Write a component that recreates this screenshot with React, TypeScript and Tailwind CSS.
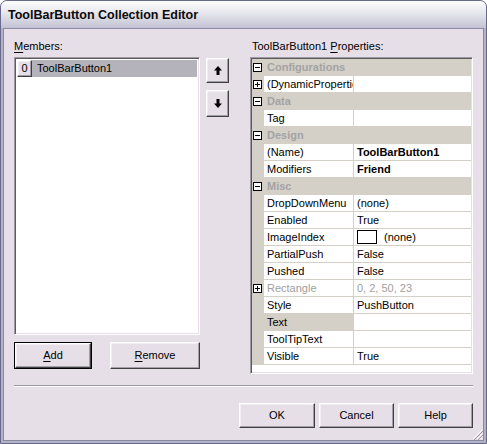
import React from 'react';

type Row =
  | { kind: 'cat'; label: string }
  | {
      kind: 'prop';
      name: string;
      value?: string;
      bold?: boolean;
      expand?: boolean;
      disabled?: boolean;
      selected?: boolean;
      image?: boolean;
    };

const rows: Row[] = [
  { kind: 'cat', label: 'Configurations' },
  { kind: 'prop', name: '(DynamicProperties)', expand: true },
  { kind: 'cat', label: 'Data' },
  { kind: 'prop', name: 'Tag' },
  { kind: 'cat', label: 'Design' },
  { kind: 'prop', name: '(Name)', value: 'ToolBarButton1', bold: true },
  { kind: 'prop', name: 'Modifiers', value: 'Friend', bold: true },
  { kind: 'cat', label: 'Misc' },
  { kind: 'prop', name: 'DropDownMenu', value: '(none)' },
  { kind: 'prop', name: 'Enabled', value: 'True' },
  { kind: 'prop', name: 'ImageIndex', value: '(none)', image: true },
  { kind: 'prop', name: 'PartialPush', value: 'False' },
  { kind: 'prop', name: 'Pushed', value: 'False' },
  { kind: 'prop', name: 'Rectangle', value: '0, 2, 50, 23', expand: true, disabled: true },
  { kind: 'prop', name: 'Style', value: 'PushButton' },
  { kind: 'prop', name: 'Text', selected: true },
  { kind: 'prop', name: 'ToolTipText' },
  { kind: 'prop', name: 'Visible', value: 'True' },
];

const raised =
  'border border-t-white border-l-white border-r-[#404040] border-b-[#404040] shadow-[inset_-1px_-1px_0_#a49ea8,inset_1px_1px_0_#f3eef3]';
const sunken =
  'border border-t-[#a09aa4] border-l-[#a09aa4] border-r-white border-b-white shadow-[inset_1px_1px_0_#5a5a5a,inset_-1px_-1px_0_#e7dfe7]';

function Toggle({ open }: { open: boolean }) {
  return (
    <div className="w-[9px] h-[9px] border border-black bg-white relative">
      <div className="absolute left-[1px] top-[3px] w-[5px] h-px bg-black" />
      {!open && <div className="absolute left-[3px] top-[1px] w-px h-[5px] bg-black" />}
    </div>
  );
}

function Arrow({ up }: { up: boolean }) {
  return (
    <svg width="8" height="9" viewBox="0 0 8 9" className={up ? '' : 'rotate-180'}>
      <polygon points="4,0 8,4.5 5.5,4.5 5.5,9 2.5,9 2.5,4.5 0,4.5" fill="#000" />
    </svg>
  );
}

function Button({ children, w, isDefault }: { children: React.ReactNode; w: string; isDefault?: boolean }) {
  if (isDefault) {
    return (
      <div className={`${w} h-[27px] border border-black`}>
        <div className={`${raised} w-full h-full flex items-center justify-center`}>{children}</div>
      </div>
    );
  }
  return <div className={`${raised} ${w} flex items-center justify-center`}>{children}</div>;
}

function PropertyGrid() {
  return (
    <div className={`${sunken} w-[223px] h-[317px] bg-white p-px`}>
      <div className="flex flex-col">
        {rows.map((r, i) =>
          r.kind === 'cat' ? (
            <div key={i} className="h-[17px] flex bg-[#d4d0c8]">
              <div className="w-[12px] flex items-center pl-[1px]">
                <Toggle open />
              </div>
              <div className="pl-[3px] leading-[16px] font-bold text-[#a3a3a3]">{r.label}</div>
            </div>
          ) : (
            <div key={i} className="h-[17px] flex">
              <div className="w-[12px] shrink-0 bg-[#d4d0c8] flex items-center pl-[1px]">
                {r.expand && <Toggle open={false} />}
              </div>
              <div
                className={`w-[89px] shrink-0 h-[17px] border-b border-[#d4d0c8] pl-[3px] leading-[16px] whitespace-nowrap overflow-hidden ${
                  r.selected ? 'bg-[#d4d0c8]' : ''
                } ${r.disabled ? 'text-[#a0a0a0]' : ''}`}
              >
                {r.name}
              </div>
              <div className="w-px bg-[#d4d0c8]" />
              <div
                className={`flex-1 h-[17px] border-b border-[#d4d0c8] pl-[3px] leading-[16px] flex items-start whitespace-nowrap ${
                  r.bold ? 'font-bold' : ''
                } ${r.disabled ? 'text-[#a0a0a0]' : ''}`}
              >
                {r.image && <div className="w-[20px] h-[14px] border border-black mt-[1px] mr-[7px]" />}
                {r.value}
              </div>
            </div>
          )
        )}
      </div>
    </div>
  );
}

export default function App() {
  return (
    <div className="w-[487px] h-[444px] bg-[#b3b3c8] border border-[#68688a] rounded-t-[7px] flex flex-col overflow-hidden font-['Liberation_Sans',Arial,sans-serif] text-[11px] text-black">
      <div className="h-[27px] shrink-0 bg-gradient-to-b from-[#fdfdfe] via-[#e3e3eb] to-[#c2c2d3] flex items-center pl-[7px] pt-[1px]">
        <span className="text-[12.5px] font-bold text-[#0a0a0a]">ToolBarButton Collection Editor</span>
      </div>
      <div className="flex-1 mx-[2px] mb-[2px] border border-[#8a8aa4] bg-[#e7dfe7] relative flex flex-col px-[10px] pt-[11px]">
        <div className="flex items-start">
          <div className="w-[186px] flex flex-col">
            <div className="h-[13px] leading-[13px]">
              <span className="underline underline-offset-2">M</span>embers:
            </div>
            <div className={`${sunken} mt-[4px] h-[278px] bg-white p-[2px]`}>
              <div className="h-[17px] flex bg-[#b4b3bb]">
                <div className={`${raised} w-[15px] h-[17px] bg-[#e7dfe7] flex items-center justify-center`}>0</div>
                <div className="pl-[5px] leading-[17px]">ToolBarButton1</div>
              </div>
            </div>
            <div className="flex justify-between mt-[7px]">
              <Button w="w-[78px]" isDefault>
                <span className="underline underline-offset-2">A</span>dd
              </Button>
              <Button w="w-[90px] h-[27px]">
                <span className="underline underline-offset-2">R</span>emove
              </Button>
            </div>
          </div>
          <div className="ml-[6px] mt-[18px] flex flex-col gap-[7px]">
            <div className={`${raised} w-[23px] h-[25px] flex items-center justify-center`}>
              <Arrow up />
            </div>
            <div className={`${raised} w-[23px] h-[27px] flex items-center justify-center`}>
              <Arrow up={false} />
            </div>
          </div>
          <div className="ml-[21px] flex flex-col">
            <div className="h-[13px] leading-[13px] pl-[2px]">
              ToolBarButton1 <span className="underline underline-offset-2">P</span>roperties:
            </div>
            <div className="mt-[4px]">
              <PropertyGrid />
            </div>
          </div>
        </div>
        <div className="mt-[11px] h-[2px] border-t border-[#a09aa4] border-b border-b-white" />
        <div className="mt-[16px] flex justify-end gap-[4px]">
          <Button w="w-[76px] h-[25px]">OK</Button>
          <Button w="w-[75px] h-[25px]">Cancel</Button>
          <Button w="w-[75px] h-[25px]">Help</Button>
        </div>
        <svg width="12" height="12" viewBox="0 0 12 12" className="absolute right-0 bottom-0">
          <line x1="11" y1="2" x2="2" y2="11" stroke="#fff" />
          <line x1="12" y1="3" x2="3" y2="12" stroke="#a09aa4" />
          <line x1="11" y1="6" x2="6" y2="11" stroke="#fff" />
          <line x1="12" y1="7" x2="7" y2="12" stroke="#a09aa4" />
          <line x1="11" y1="10" x2="10" y2="11" stroke="#fff" />
        </svg>
      </div>
    </div>
  );
}
